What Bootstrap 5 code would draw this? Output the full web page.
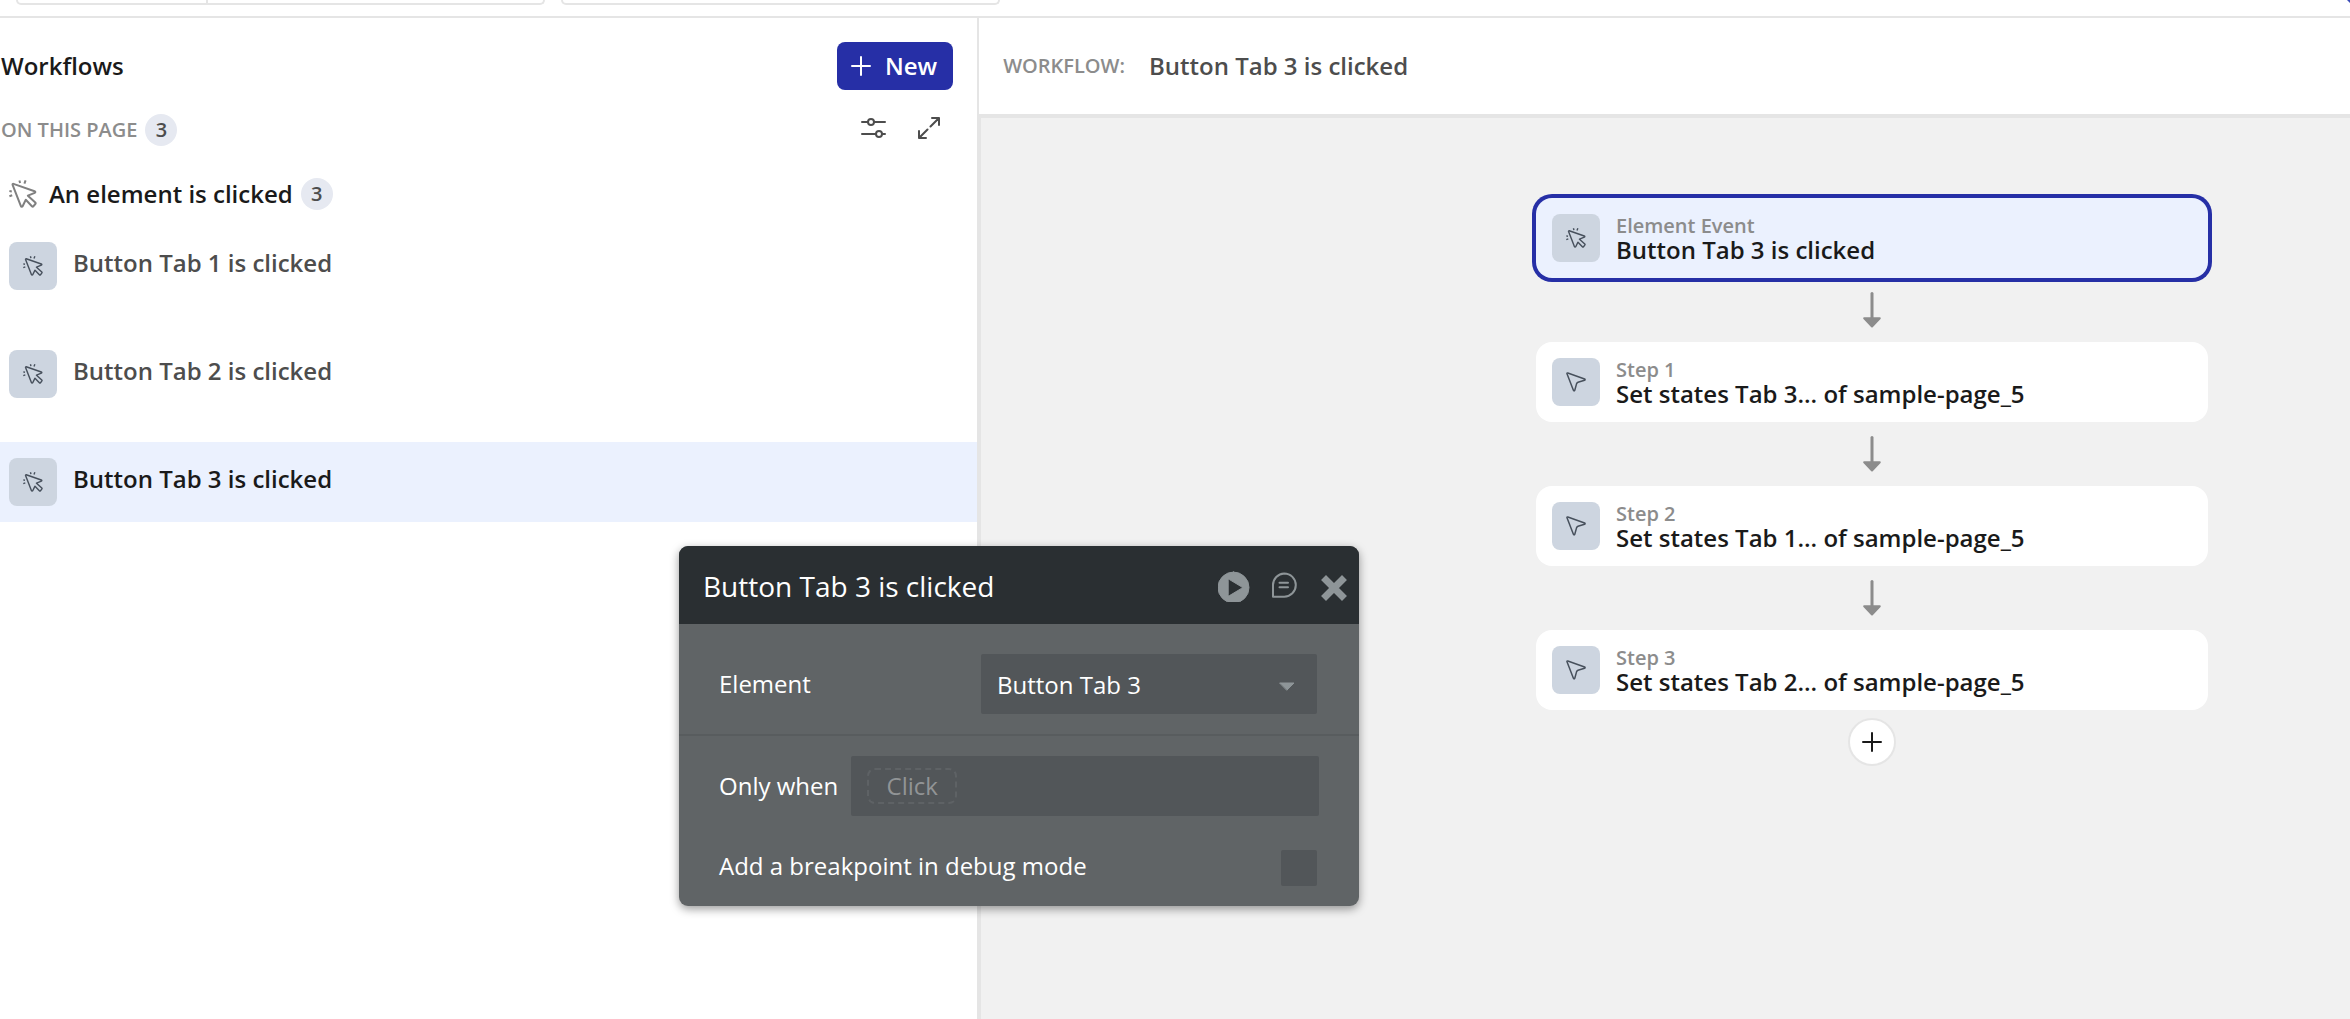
<!DOCTYPE html>
<html lang="en">
<head>
<meta charset="utf-8">
<meta name="viewport" content="width=device-width, initial-scale=1">
<title>Workflows</title>
<link href="https://cdn.jsdelivr.net/npm/bootstrap@5.3.0/dist/css/bootstrap.min.css" rel="stylesheet">
<style>
  body { font-family: "Open Sans", "Noto Sans", sans-serif; font-size: 24px; font-weight: 600; color: #1a1a1a; }
  svg { display: block; flex: none; fill: none; stroke: currentColor; stroke-linecap: round; stroke-linejoin: round; }
  .topbar { height: 18px; border-bottom: 2px solid #e5e5e5; padding-left: 16px; gap: 16px; overflow: hidden; }
  .topbox { height: 5px; border: 2px solid #e5e5e5; border-top: 0; border-radius: 0 0 8px 8px; }
  .topbox-split { width: 190px; border-right: 2px solid #e5e5e5; }
  .topbox-wide { width: 529px; }
  .topbox-narrow { width: 439px; }
  .presence { color: #3b4cb8; }
  .sidebar { border-right: 2px solid #e5e5e5; padding-top: 24px; }
  .side-line { padding-left: 1px; padding-right: 24px; }
  .side-tools { padding-left: 1px; padding-right: 37px; margin-top: 24px; }
  .side-group { padding-left: 9px; margin-top: 32px; margin-bottom: 16px; line-height: 32px; }
  .group-icon { color: #808080; }
  .panel-title { font-size: 24px; font-weight: 600; line-height: 32px; margin: 0; }
  .caps { font-size: 20px; line-height: 32px; color: #8c8c8c; }
  .count { width: 32px; height: 32px; border-radius: 16px; background: #e6e9f1; color: #4d4d4d; font-size: 20px; line-height: 32px; text-align: center; }
  .btn-new { --bs-btn-bg: #262fa6; --bs-btn-color: #fff; --bs-btn-hover-bg: #1e2689; --bs-btn-hover-color: #fff; height: 48px; padding: 0 16px 0 14px; border: 0; border-radius: 8px; font-size: 24px; font-weight: 600; gap: 14px; }
  .icon-btn { background: none; border: 0; padding: 0; color: #4d4d4d; }
  .flow-list { gap: 28px; }
  .flow-item { height: 80px; padding: 16px 9px; gap: 16px; color: #4d4d4d; text-decoration: none; line-height: 42px; }
  .flow-item.active { background: #ebf1fe; color: #1a1a1a; }
  .tile { width: 48px; height: 48px; border-radius: 8px; background: #cdd5e0; color: #47505c; flex: none; }
  .flow-head { height: 96px; padding-left: 24px; gap: 24px; }
  .flow-name { color: #4d4d4d; }
  .canvas { background: #f1f1f1; border-top: 4px solid #e5e5e5; border-left: 2px solid #e5e5e5; padding: 80px 142px 0 0; }
  .nodes { width: 672px; }
  .node { height: 80px; width: 100%; padding: 16px; gap: 16px; border: 0; border-radius: 16px; background: #fff; color: #1a1a1a; text-align: left; font-weight: 600; }
  .node.active { background: #ebf1fe; box-shadow: 0 0 0 4px #262fa6; }
  .node-kind { font-size: 20px; line-height: 24px; color: #8c8c8c; }
  .node-name { line-height: 24px; }
  .arrow { color: #8c8c8c; margin: 14px 0; }
  .add { width: 48px; height: 48px; border: 2px solid #e5e5e5; border-radius: 24px; background: #fff; padding: 0; margin-top: 8px; color: #1a1a1a; }
  .editor { left: 679px; top: 546px; width: 680px; border-radius: 9px; overflow: hidden; background: #606466; color: #fff; font-weight: 400; box-shadow: 0 3px 10px rgba(0,0,0,.4); z-index: 5; }
  .editor-head { height: 78px; background: #2a2f32; padding: 2px 12px 0 24px; }
  .editor-title { font-size: 28px; font-weight: 400; line-height: 40px; margin: 0; }
  .editor-head .icon-btn { color: #8e9598; }
  .editor-row { padding: 30px 42px 20px 40px; border-bottom: 2px solid #585c5e; }
  .editor-field { background-color: #525659; border: 0; border-radius: 2px; height: 60px; color: #fff; }
  .editor select.editor-field { display: block; width: 336px; font-size: 24px; padding: 2px 40px 0 16px; appearance: none; }
  .caret { right: 22px; top: 28px; color: #8e9598; pointer-events: none; }
  .dyn { background: none; border: 2px dashed #5e6265; border-radius: 8px; width: 90px; height: 36px; padding: 0; line-height: 32px; color: #919496; font-size: 24px; margin-left: 16px; }
  .editor .break-box { appearance: none; width: 36px; height: 36px; margin: 0; background: #525659; border: 0; border-radius: 2px; }
  .editor-cond { padding: 20px 40px 0; gap: 13px; }
  .editor-break { padding: 34px 42px 20px 40px; line-height: 32px; }
</style>
<script src="https://cdn.jsdelivr.net/npm/bootstrap@5.3.0/dist/js/bootstrap.bundle.min.js"></script>
</head>
<body>
<svg width="0" height="0" class="position-absolute" aria-hidden="true">
  <symbol id="i-click" viewBox="0 0 28 28"><path d="M3.6 4.8C3.4 4.2 3.9 3.7 4.5 3.9L25.6 11.2C26.6 11.6 26.6 12.4 25.7 12.8L18.9 15.7L26.3 22.4Q27 23.2 26.3 24L24.5 26.2Q23.7 27 22.9 26.2L16.8 19.8L13.6 26.2C13.2 27 12.2 27 11.9 26.1Z"/><path stroke-linecap="butt" d="M10.4 .4l.7 2.6M16.6 .4l-1.2 3.2M.4 11l2.4.5M.4 16.2l2.8-1"/></symbol>
  <symbol id="i-state" viewBox="0 0 20 20"><path d="M1 1.8C.8 1.2 1.2.8 1.8 1L18.6 7C19.3 7.3 19.3 8 18.6 8.2L12 10.2Q11 10.6 10.6 11.6L8.8 18.3C8.5 19.1 7.7 19.1 7.4 18.3Z"/></symbol>
  <symbol id="i-arrow" viewBox="0 0 18 36"><path d="M9 1.5V28" stroke-width="3"/><path d="M1.2 26.2H16.8L9 34.5Z" fill="currentColor" stroke-width="2"/></symbol>
</svg>

<div class="d-flex flex-column vh-100 position-relative overflow-hidden">
  <header class="topbar d-flex align-items-start flex-shrink-0">
    <div class="topbox topbox-wide d-flex"><div class="topbox-split"></div></div>
    <div class="topbox topbox-narrow"></div>
    <svg class="presence ms-auto" width="3" height="3" viewBox="0 0 3 3"><path d="M0 0H3V3Z" fill="currentColor" stroke="none"/></svg>
  </header>

  <div class="row g-0 flex-grow-1">
    <aside class="sidebar col-5">
      <div class="side-line d-flex align-items-center justify-content-between">
        <h1 class="panel-title">Workflows</h1>
        <button type="button" class="btn btn-new d-flex align-items-center">
          <svg width="20" height="20" viewBox="0 0 20 20" stroke-width="2"><path d="M10 1V19M1 10H19"/></svg>New
        </button>
      </div>
      <div class="side-tools d-flex align-items-start justify-content-between">
        <div class="d-flex gap-2"><span class="caps">ON THIS PAGE</span><span class="count">3</span></div>
        <div class="d-flex">
          <button type="button" class="icon-btn me-4" aria-label="Filter">
            <svg width="33" height="28" viewBox="0 -2 33 28" stroke-width="2"><path d="M1 6H7M13 6H24M1 18H15M21 18H24"/><circle cx="10" cy="6" r="3"/><circle cx="18" cy="18" r="3"/></svg>
          </button>
          <button type="button" class="icon-btn" aria-label="Expand">
            <svg width="22" height="28" viewBox="0 -2 22 28" stroke-width="2" stroke-linecap="butt" stroke-linejoin="miter"><path d="M14 2H21V9M21 2L12.5 10.5M8 22H1V15M1 22L9.5 13.5"/></svg>
          </button>
        </div>
      </div>
      <div class="side-group d-flex align-items-center">
        <svg class="group-icon" width="28" height="28" stroke-width="2"><use href="#i-click"/></svg>
        <span class="ms-2 ps-1">An element is clicked</span><span class="count ms-2">3</span>
      </div>
      <nav class="flow-list d-flex flex-column">
        <a href="#" class="flow-item d-flex"><span class="tile d-flex align-items-center justify-content-center"><svg width="20" height="20" stroke-width="2"><use href="#i-click"/></svg></span>Button Tab 1 is clicked</a>
        <a href="#" class="flow-item d-flex"><span class="tile d-flex align-items-center justify-content-center"><svg width="20" height="20" stroke-width="2"><use href="#i-click"/></svg></span>Button Tab 2 is clicked</a>
        <a href="#" class="flow-item d-flex active"><span class="tile d-flex align-items-center justify-content-center"><svg width="20" height="20" stroke-width="2"><use href="#i-click"/></svg></span>Button Tab 3 is clicked</a>
      </nav>
    </aside>

    <main class="col-7 d-flex flex-column">
      <div class="flow-head d-flex align-items-center">
        <span class="caps">WORKFLOW:</span><span class="flow-name">Button Tab 3 is clicked</span>
      </div>
      <div class="canvas flex-grow-1">
        <div class="nodes d-flex flex-column align-items-center ms-auto">
          <button type="button" class="node active d-flex align-items-start"><span class="tile d-flex align-items-center justify-content-center"><svg width="20" height="20" stroke-width="2"><use href="#i-click"/></svg></span><span class="d-flex flex-column"><span class="node-kind">Element Event</span><span class="node-name">Button Tab 3 is clicked</span></span></button>
          <svg class="arrow" width="18" height="36"><use href="#i-arrow"/></svg>
          <button type="button" class="node d-flex align-items-start"><span class="tile d-flex align-items-center justify-content-center"><svg width="20" height="20" stroke-width="1.5"><use href="#i-state"/></svg></span><span class="d-flex flex-column"><span class="node-kind">Step 1</span><span class="node-name">Set states Tab 3... of sample-page_5</span></span></button>
          <svg class="arrow" width="18" height="36"><use href="#i-arrow"/></svg>
          <button type="button" class="node d-flex align-items-start"><span class="tile d-flex align-items-center justify-content-center"><svg width="20" height="20" stroke-width="1.5"><use href="#i-state"/></svg></span><span class="d-flex flex-column"><span class="node-kind">Step 2</span><span class="node-name">Set states Tab 1... of sample-page_5</span></span></button>
          <svg class="arrow" width="18" height="36"><use href="#i-arrow"/></svg>
          <button type="button" class="node d-flex align-items-start"><span class="tile d-flex align-items-center justify-content-center"><svg width="20" height="20" stroke-width="1.5"><use href="#i-state"/></svg></span><span class="d-flex flex-column"><span class="node-kind">Step 3</span><span class="node-name">Set states Tab 2... of sample-page_5</span></span></button>
          <button type="button" class="add d-flex align-items-center justify-content-center" aria-label="Add step"><svg width="20" height="20" viewBox="0 0 20 20" stroke-width="2"><path d="M10 1V19M1 10H19"/></svg></button>
        </div>
      </div>
    </main>
  </div>

  <section class="editor position-absolute">
    <div class="editor-head d-flex align-items-center">
      <h2 class="editor-title me-auto">Button Tab 3 is clicked</h2>
      <button type="button" class="icon-btn me-3" aria-label="Run"><svg width="37" height="31" viewBox="0 -1 37 31" stroke="none"><path fill="currentColor" fill-rule="evenodd" d="M15.5 0a15.5 15.5 0 1 1 0 31a15.5 15.5 0 1 1 0-31ZM11.5 7.6C10.8 7.2 10.2 7.6 10.2 8.4V22.8C10.2 23.6 10.8 24 11.5 23.6L23.8 16.2Q24.6 15.6 23.8 15Z" overflow="visible"/></svg></button>
      <button type="button" class="icon-btn me-4" aria-label="Comment"><svg width="26" height="31" viewBox="0 -1 26 31" stroke-width="2"><path d="M13.2 1.5a11.6 11.6 0 1 1 0 23.2H2V13.1A11.6 11.6 0 0 1 13.2 1.5ZM8.5 10.8H17M8.5 15.2H17"/></svg></button>
      <button type="button" class="icon-btn" aria-label="Close"><svg width="26" height="31" viewBox="0 0 26 31"><path d="M5 9L21 25M21 9L5 25" stroke-width="7" stroke-linecap="square"/></svg></button>
    </div>
    <div class="editor-row d-flex align-items-center justify-content-between">
      <label for="el">Element</label>
      <div class="position-relative">
        <select id="el" class="editor-field"><option>Button Tab 3</option></select>
        <svg class="caret position-absolute" width="16" height="9" viewBox="0 0 16 9"><path d="M1 1H15L8 8Z" fill="currentColor" stroke-width="1"/></svg>
      </div>
    </div>
    <div class="editor-cond d-flex align-items-center">
      <label for="cond">Only when</label>
      <div class="editor-field d-flex align-items-center flex-grow-1"><button type="button" id="cond" class="dyn">Click</button></div>
    </div>
    <div class="editor-break d-flex align-items-start justify-content-between">
      <label for="brk">Add a breakpoint in debug mode</label>
      <input type="checkbox" id="brk" class="break-box">
    </div>
  </section>
</div>
</body>
</html>
